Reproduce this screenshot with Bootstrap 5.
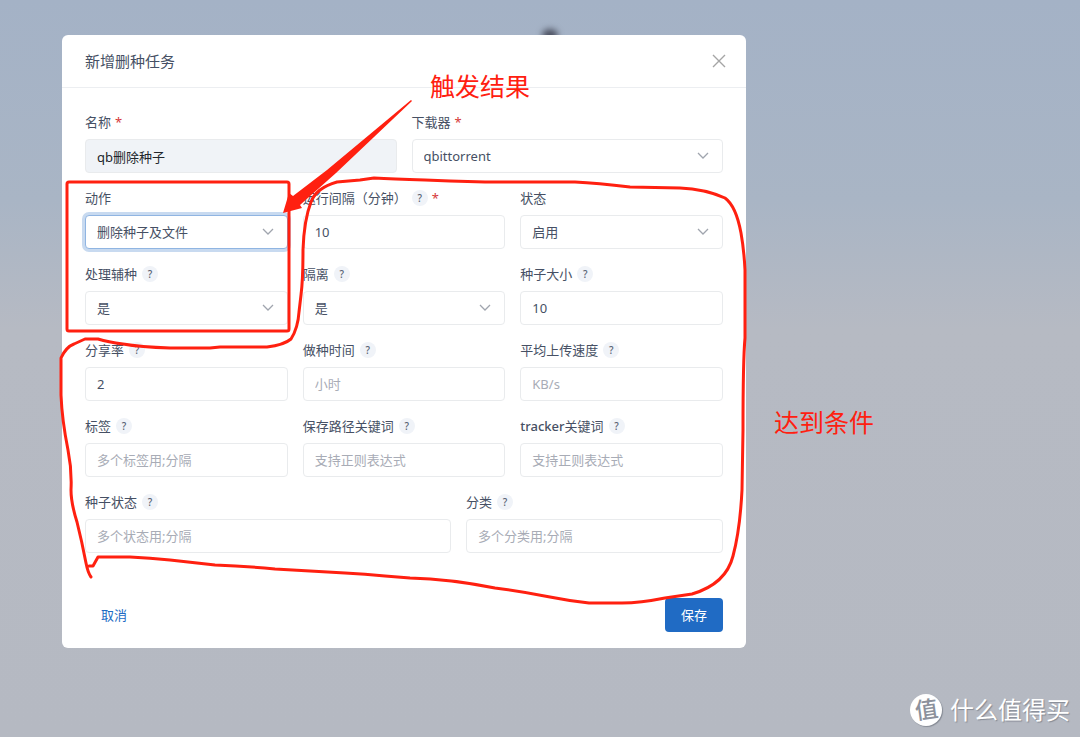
<!DOCTYPE html>
<html lang="zh-CN">
<head>
<meta charset="utf-8">
<meta name="viewport" content="width=device-width, initial-scale=1">
<title>新增删种任务</title>
<link href="https://cdn.jsdelivr.net/npm/bootstrap@5.3.0/dist/css/bootstrap.min.css" rel="stylesheet">
<style>
  :root { --mark: #ff2010; --ink: #465064; --line: #e9ebed; }
  body {
    font-family: "Noto Sans", "Noto Sans CJK SC", sans-serif;
    font-size: 13px; line-height: 20px; color: var(--ink);
    background: linear-gradient(#a4b2c6 0, #a9b5c5 200px, #b6bac3 330px, #b5b9c2 100%) no-repeat #b5b9c2;
  }
  .stage {
    display: grid; grid-template-columns: minmax(0, 684px) 1fr; column-gap: 28px;
    padding: 35px 0 0 62px;
  }
  .panel { background: #fff; border-radius: 6px; }
  .panel-head { height: 53px; padding: 0 20px 0 23px; border-bottom: 1px solid #eceef1; }
  .panel-head h1 { font-size: 15px; line-height: 20px; font-weight: 400; }
  .panel-form { padding: 24px 23px 0; }
  .panel-form .row { --bs-gutter-x: 15px; --bs-gutter-y: 15px; }
  .panel-foot { padding: 45px 23px 16px; }
  .field-head { height: 20px; margin-bottom: 7px; }
  .field-head .need { color: #d63939; margin-left: 4px; }
  .help {
    width: 16px; height: 16px; margin-left: 5px; border-radius: 50%; border: 0; padding: 0;
    background: #f0f3f8; color: #596273; font-size: 10px; line-height: 16px; font-weight: 500;
  }
  .form-control, .form-select {
    height: 34px; padding: 0 11px; font-size: 13px; line-height: 20px;
    color: var(--ink); border-color: var(--line); border-radius: 4px;
  }
  .form-control::placeholder { color: #a8acb6; }
  .form-control[readonly] { background: #f0f3f7; color: #22262c; }
  .form-select {
    padding-right: 32px;
    background-image: url("data:image/svg+xml,%3Csvg xmlns='http://www.w3.org/2000/svg' viewBox='0 0 12 12'%3E%3Cpath d='M1 3l5 5 5-5' fill='none' stroke='%23a0a5ae' stroke-width='1.3'/%3E%3C/svg%3E");
    background-size: 12px 12px; background-position: right 13px center;
  }
  .form-select.is-active, .form-select:focus { border-color: #90b5e2; box-shadow: 0 0 0 3px #c8daf0; }
  .shut { width: 14px; height: 14px; color: #a5a5a5; }
  .btn { font-size: 13px; line-height: 20px; padding: 6px 15px; border-radius: 4px; }
  .btn-keep { --bs-btn-bg: #206bc4; --bs-btn-color: #fff; --bs-btn-hover-bg: #1d60b0; --bs-btn-hover-color: #fff; }
  .btn-drop { --bs-btn-color: #206bc4; }
  .marks { inset: 0; overflow: visible; pointer-events: none; }
  .note { color: var(--mark); font-size: 25px; line-height: 36px; white-space: nowrap; }
  .note-top { left: 368px; top: 33px; }
  .note-side { padding-top: 369px; }
  .smudge { left: 480px; top: -6px; width: 16px; height: 12px; border-radius: 50%; background: #4b5060; filter: blur(3px); z-index: -1; }
  .brand { right: 10px; bottom: 9px; color: #fff; font-size: 24px; line-height: 36px; gap: 8px; text-shadow: 1px 1px 1px #868b95; }
  .brand-dot {
    width: 32px; height: 32px; border-radius: 50%; background: #fff; color: #8c919c;
    font-size: 23px; line-height: 31px; font-weight: 500; text-shadow: none; box-shadow: 1px 1px 1px #868b95;
  }
  .brand-dot span { transform: rotate(-8deg); }
</style>
</head>
<body class="min-vh-100 position-relative">
<main class="stage">
  <div class="position-relative z-0">
    <div class="smudge position-absolute"></div>
    <section class="panel">
      <header class="panel-head d-flex align-items-center justify-content-between">
        <h1 class="m-0">新增删种任务</h1>
        <button type="button" class="btn p-0 border-0 d-flex" aria-label="关闭">
          <svg class="shut" viewBox="0 0 14 14" fill="none" stroke="currentColor" stroke-width="1.4"><path d="M1 1l12 12M13 1L1 13"/></svg>
        </button>
      </header>
      <form class="panel-form">
        <div class="row">
          <div class="col-6">
            <div class="field-head d-flex align-items-center"><label for="name">名称</label><span class="need">*</span></div>
            <input id="name" class="form-control" value="qb删除种子" readonly>
          </div>
          <div class="col-6">
            <div class="field-head d-flex align-items-center"><label for="client">下载器</label><span class="need">*</span></div>
            <select id="client" class="form-select"><option>qbittorrent</option></select>
          </div>
          <div class="col-4">
            <div class="field-head d-flex align-items-center"><label for="action">动作</label></div>
            <select id="action" class="form-select is-active"><option>删除种子及文件</option></select>
          </div>
          <div class="col-4">
            <div class="field-head d-flex align-items-center"><label for="interval">运行间隔（分钟）</label><button type="button" class="help">?</button><span class="need">*</span></div>
            <input id="interval" class="form-control" value="10">
          </div>
          <div class="col-4">
            <div class="field-head d-flex align-items-center"><label for="state">状态</label></div>
            <select id="state" class="form-select"><option>启用</option></select>
          </div>
          <div class="col-4">
            <div class="field-head d-flex align-items-center"><label for="cross">处理辅种</label><button type="button" class="help">?</button></div>
            <select id="cross" class="form-select"><option>是</option></select>
          </div>
          <div class="col-4">
            <div class="field-head d-flex align-items-center"><label for="isolate">隔离</label><button type="button" class="help">?</button></div>
            <select id="isolate" class="form-select"><option>是</option></select>
          </div>
          <div class="col-4">
            <div class="field-head d-flex align-items-center"><label for="size">种子大小</label><button type="button" class="help">?</button></div>
            <input id="size" class="form-control" value="10">
          </div>
          <div class="col-4">
            <div class="field-head d-flex align-items-center"><label for="ratio">分享率</label><button type="button" class="help">?</button></div>
            <input id="ratio" class="form-control" value="2">
          </div>
          <div class="col-4">
            <div class="field-head d-flex align-items-center"><label for="seedtime">做种时间</label><button type="button" class="help">?</button></div>
            <input id="seedtime" class="form-control" placeholder="小时">
          </div>
          <div class="col-4">
            <div class="field-head d-flex align-items-center"><label for="speed">平均上传速度</label><button type="button" class="help">?</button></div>
            <input id="speed" class="form-control" placeholder="KB/s">
          </div>
          <div class="col-4">
            <div class="field-head d-flex align-items-center"><label for="tags">标签</label><button type="button" class="help">?</button></div>
            <input id="tags" class="form-control" placeholder="多个标签用;分隔">
          </div>
          <div class="col-4">
            <div class="field-head d-flex align-items-center"><label for="savepath">保存路径关键词</label><button type="button" class="help">?</button></div>
            <input id="savepath" class="form-control" placeholder="支持正则表达式">
          </div>
          <div class="col-4">
            <div class="field-head d-flex align-items-center"><label for="tracker"><span class="fw-medium">tracker</span>关键词</label><button type="button" class="help">?</button></div>
            <input id="tracker" class="form-control" placeholder="支持正则表达式">
          </div>
          <div class="col-7">
            <div class="field-head d-flex align-items-center"><label for="seedstate">种子状态</label><button type="button" class="help">?</button></div>
            <input id="seedstate" class="form-control" placeholder="多个状态用;分隔">
          </div>
          <div class="col-5">
            <div class="field-head d-flex align-items-center"><label for="category">分类</label><button type="button" class="help">?</button></div>
            <input id="category" class="form-control" placeholder="多个分类用;分隔">
          </div>
        </div>
      </form>
      <footer class="panel-foot d-flex justify-content-between">
        <button type="button" class="btn btn-drop">取消</button>
        <button type="button" class="btn btn-keep">保存</button>
      </footer>
    </section>
    <!-- hand-drawn annotations over the dialog -->
    <svg class="marks position-absolute w-100 h-100" viewBox="62 35 684 613" preserveAspectRatio="none" fill="none" stroke="#ff2010" stroke-width="3" stroke-linejoin="round" stroke-linecap="round" aria-hidden="true">
      <rect x="67" y="182" width="222" height="149" rx="2"/>
      <path stroke="none" fill="#ff2010" d="M411 100L412 101L336 173L300 205L302 208L283 213L289 193L293 196L327 170Z"/>
      <path d="M91 577Q88 573 86 563Q82 542 77 522Q71 503 71 490Q72 470 68 450Q62 420 61 395V358Q66 347 74 344L85 339H98Q108 342 123 344Q140 347 170 348H210L220 347H267Q284 345 291 339Q298 328 299 312L301 295Q303 280 303 250Q304 220 311 202Q316 188 337 182L360 180L374 178Q392 179 425 180L450 181L485 182H575Q597 183 630 187L680 188Q705 189 725 198Q736 206 741 233Q744 250 745 270V338Q743 360 743 430L742 490Q740 530 733 556Q726 584 692 594L665 598Q640 603 622 603H589Q570 601 550 597Q520 591 495 588Q450 579 410 578L385 576Q365 574 345 573L275 569Q245 566 215 565L170 560Q150 558 130 557H98L93 566H89"/>
    </svg>
    <div class="note note-top position-absolute">触发结果</div>
  </div>
  <aside class="note note-side">达到条件</aside>
</main>
<div class="brand position-absolute d-flex align-items-center">
  <div class="brand-dot d-flex justify-content-center"><span>值</span></div>
  <span>什么值得买</span>
</div>
<script src="https://cdn.jsdelivr.net/npm/bootstrap@5.3.0/dist/js/bootstrap.bundle.min.js"></script>
</body>
</html>
